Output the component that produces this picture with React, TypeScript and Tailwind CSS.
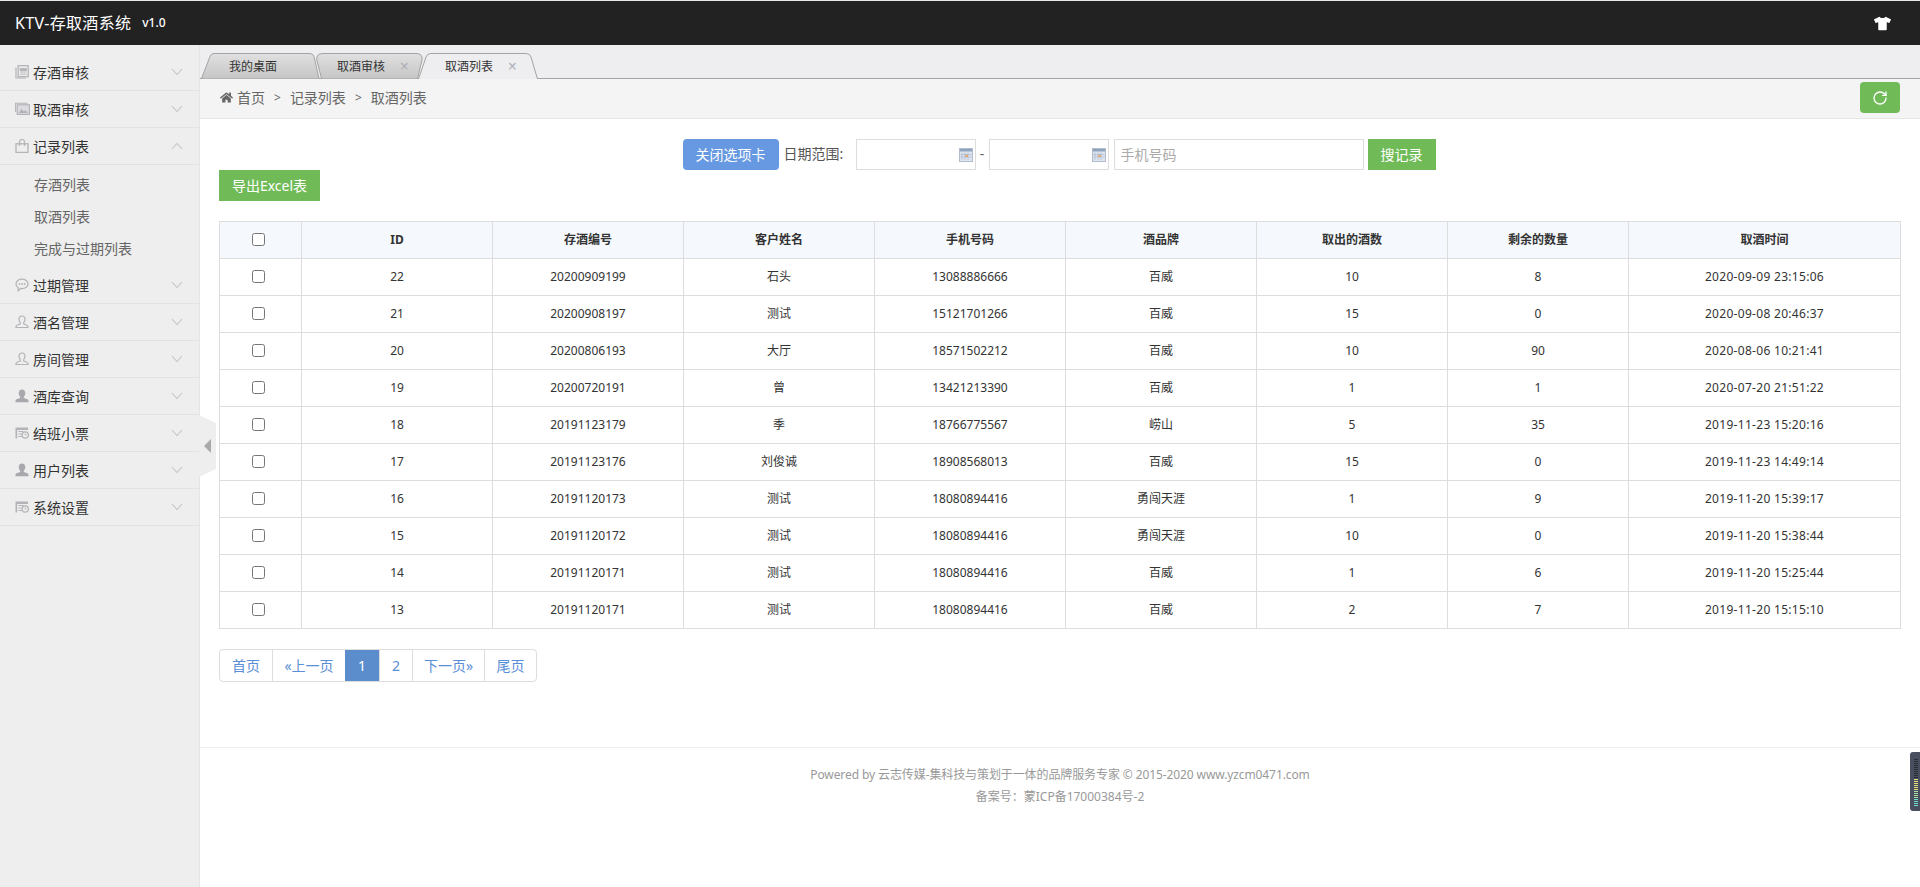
import React from 'react';
import { RotateCw } from 'lucide-react';
import { FaHome, FaTshirt } from 'react-icons/fa';

interface MenuItem {
    label: string;
    icon: React.ReactNode;
    open?: boolean;
    children?: string[];
}

const IconDoc = () => (
    <svg width="14" height="14" viewBox="0 0 14 14" className="text-[#b4b4b8]">
        <path d="M1 2.5v10.500h10" fill="none" stroke="currentColor" strokeWidth="1.200" />
        <rect x="3.200" y="0.700" width="10" height="11" fill="none" stroke="currentColor" strokeWidth="1.300" />
        <path d="M5 3.500h6.500v2H5zM5 7h6.500M5 9.200h6.500" fill="currentColor" stroke="currentColor" strokeWidth="0.900" />
    </svg>
);

const IconImage = () => (
    <svg width="15" height="14" viewBox="0 0 15 14" className="text-[#b4b4b8]">
        <path d="M0.600 10V1.200H12.500" fill="none" stroke="currentColor" strokeWidth="1.100" />
        <rect x="2.200" y="2.800" width="12.200" height="9.600" fill="#dcdce0" stroke="currentColor" strokeWidth="1.200" />
        <path d="M3.500 11l3-4 2.500 2.500 1.500-1.500 2.500 3z" fill="currentColor" />
    </svg>
);

const IconBag = () => (
    <svg width="14" height="14" viewBox="0 0 14 14" className="text-[#b4b4b8]">
        <rect x="1" y="4.800" width="12" height="8.600" fill="none" stroke="currentColor" strokeWidth="1.300" />
        <path d="M4.500 7V3a2.500 2.500 0 0 1 5 0v4" fill="none" stroke="currentColor" strokeWidth="1.200" />
    </svg>
);

const IconChat = () => (
    <svg width="14" height="14" viewBox="0 0 14 14" className="text-[#b4b4b8]">
        <path d="M7 1.200c3.200 0 6 1.900 6 4.700S10.200 10.600 7 10.600c-.5 0-1 0-1.400-.1L3.200 12.800v-3.100C1.800 8.800 1 7.500 1 5.900 1 3.100 3.800 1.200 7 1.200z" fill="none" stroke="currentColor" strokeWidth="1.300" />
        <circle cx="4.400" cy="6" r="0.900" fill="currentColor" />
        <circle cx="7" cy="6" r="0.900" fill="currentColor" />
        <circle cx="9.600" cy="6" r="0.900" fill="currentColor" />
    </svg>
);

const IconUserLine = () => (
    <svg width="14" height="14" viewBox="0 0 14 14" className="text-[#b4b4b8]">
        <path d="M7 1c1.800 0 3 1.400 3 3.300 0 1.500-.6 2.600-1.300 3.400v1.200c1.800.7 4 1.300 4.300 2.400v1.200H1v-1.200c.3-1.100 2.500-1.700 4.300-2.400V7.700C4.600 6.900 4 5.800 4 4.300 4 2.400 5.200 1 7 1z" fill="none" stroke="currentColor" strokeWidth="1.200" />
    </svg>
);

const IconUserSolid = () => (
    <svg width="14" height="14" viewBox="0 0 14 14" className="text-[#a8a8ae]">
        <path d="M7 .5c2 0 3.300 1.500 3.300 3.600 0 1.700-.7 3-1.500 3.800v1.200c1.900.6 4.200 1.200 4.700 2.400v1.800H.500v-1.800c.5-1.200 2.800-1.800 4.700-2.400V7.900C4.400 7.100 3.700 5.800 3.700 4.100 3.700 2 5 .5 7 .5z" fill="currentColor" />
    </svg>
);

const IconCard = () => (
    <svg width="14" height="14" viewBox="0 0 14 14" className="text-[#b4b4b8]">
        <path d="M.5 1.500h12.500v2.500H2.200v8.500H.500z" fill="currentColor" />
        <path d="M3.500 5.500h5M3.500 8h3.500M3.500 10.500h3.500" stroke="currentColor" strokeWidth="1.200" />
        <circle cx="10.300" cy="9" r="3.100" fill="#eeeeee" stroke="currentColor" strokeWidth="1.200" />
        <path d="M10.300 7.500V9h1.400" fill="none" stroke="currentColor" strokeWidth="0.900" />
    </svg>
);

const IconCalendar = () => (
    <svg width="14" height="14" viewBox="0 0 14 14">
        <rect x="0.500" y="0.500" width="13" height="13" fill="#dfe5f0" stroke="#b3bccb" />
        <rect x="1" y="1" width="12" height="2.500" fill="#8fa3c0" />
        <path d="M3 4.500v7.500M6 4.500v7.500M9 4.500v7.500M1.500 6.500h11M1.500 9h11" stroke="#a9b7cc" strokeWidth="0.700" />
        <rect x="6.300" y="6.800" width="2.500" height="2" fill="#e2a45d" />
    </svg>
);

const Chevron = ({ up }: { up?: boolean }) => (
    <svg width="12" height="8" viewBox="0 0 12 8" className="text-[#c4c4c4]">
        <path d={up ? 'M1 7l5-5.500L11 7' : 'M1 1l5 5.500L11 1'} fill="none" stroke="currentColor" strokeWidth="1.100" />
    </svg>
);

const menus: MenuItem[] = [
    { label: '存酒审核', icon: <IconDoc /> },
    { label: '取酒审核', icon: <IconImage /> },
    { label: '记录列表', icon: <IconBag />, open: true, children: ['存酒列表', '取酒列表', '完成与过期列表'] },
    { label: '过期管理', icon: <IconChat /> },
    { label: '酒名管理', icon: <IconUserLine /> },
    { label: '房间管理', icon: <IconUserLine /> },
    { label: '酒库查询', icon: <IconUserSolid /> },
    { label: '结班小票', icon: <IconCard /> },
    { label: '用户列表', icon: <IconUserSolid /> },
    { label: '系统设置', icon: <IconCard /> },
];

const rows = [
    [22, '20200909199', '石头', '13088886666', '百威', 10, 8, '2020-09-09 23:15:06'],
    [21, '20200908197', '测试', '15121701266', '百威', 15, 0, '2020-09-08 20:46:37'],
    [20, '20200806193', '大厅', '18571502212', '百威', 10, 90, '2020-08-06 10:21:41'],
    [19, '20200720191', '曾', '13421213390', '百威', 1, 1, '2020-07-20 21:51:22'],
    [18, '20191123179', '季', '18766775567', '崂山', 5, 35, '2019-11-23 15:20:16'],
    [17, '20191123176', '刘俊诚', '18908568013', '百威', 15, 0, '2019-11-23 14:49:14'],
    [16, '20191120173', '测试', '18080894416', '勇闯天涯', 1, 9, '2019-11-20 15:39:17'],
    [15, '20191120172', '测试', '18080894416', '勇闯天涯', 10, 0, '2019-11-20 15:38:44'],
    [14, '20191120171', '测试', '18080894416', '百威', 1, 6, '2019-11-20 15:25:44'],
    [13, '20191120171', '测试', '18080894416', '百威', 2, 7, '2019-11-20 15:15:10'],
];

const headers = ['ID', '存酒编号', '客户姓名', '手机号码', '酒品牌', '取出的酒数', '剩余的数量', '取酒时间'];

const Sidebar = () => (
    <aside className="relative w-[200px] shrink-0 bg-[#eeeeee] border-r border-[#e5e5e5] pt-[9px]">
        {menus.map(menu => (
            <div key={menu.label}>
                <div className="h-[37px] border-b border-[#e2e2e2] flex items-center pl-[15px] pr-[16px] text-sm text-[#333]">
                    <span className="w-[18px] flex shrink-0">{menu.icon}</span>
                    <span className="flex-1 pt-px">{menu.label}</span>
                    <Chevron up={menu.open} />
                </div>
                {menu.children && (
                    <ul className="pt-[4px] pb-[2px]">
                        {menu.children.map(child => (
                            <li key={child} className="h-[32px] leading-[32px] pl-[34px] text-[14px] text-[#666]">{child}</li>
                        ))}
                    </ul>
                )}
            </div>
        ))}
        {/* collapse handle */}
        <svg width="18" height="62" viewBox="0 0 18 62" className="absolute left-full top-[370px]">
            <path d="M0 0l17 8v46L0 62z" fill="#eeeeee" />
            <path d="M12 24v14l-7-7z" fill="#a9a9a9" />
        </svg>
    </aside>
);

const Tab = ({ label, width, path, active, closable, textLeft, className }: { label: string, width: number, path: string, active?: boolean, closable?: boolean, textLeft: number, className?: string }) => (
    <div className={`relative shrink-0 ${active ? 'h-[26px] z-10 -mb-px' : 'h-[25px]'} ${className ?? ''}`} style={{ width }}>
        <svg width={width} height="26" viewBox={`0 0 ${width} 26`} className="absolute left-0 top-0">
            <defs>
                <linearGradient id="tabBg" x1="0" y1="0" x2="0" y2="1">
                    <stop offset="0" stopColor="#e0e0e0" />
                    <stop offset="1" stopColor="#c6c6c6" />
                </linearGradient>
            </defs>
            <path d={path} fill={active ? '#eeeef0' : 'url(#tabBg)'} stroke="#a3a3a3" />
        </svg>
        <span className="absolute top-0 leading-[27px] text-xs text-[#333] whitespace-nowrap" style={{ left: textLeft }}>{label}</span>
        {closable && <span className="absolute top-0 leading-[26px] text-base text-[#b0b0b8]" style={{ right: active ? 21 : 15 }}>×</span>}
    </div>
);

const Tabs = () => (
    <div className="h-[34px] bg-[#eeeef0] border-b border-[#a3a3a3] flex items-end pl-px shrink-0">
        <Tab label="我的桌面" width={120} textLeft={28} path="M0.500 25.500L9 3.500Q10 0.500 13 0.500L109 0.500Q112 0.500 113 3.500L118 25.500" />
        <Tab label="取酒审核" width={108} textLeft={21} closable className="-ml-[5px] z-[1]" path="M5.500 25.500L0.800 7Q0 0.500 7 0.500L100 0.500Q107 0.500 106 7L101.500 25.500" />
        <Tab label="取酒列表" width={120} textLeft={27} active closable className="-ml-[6px]" path="M0.500 26L8 4Q9 0.500 13 0.500L108 0.500Q112 0.500 113 4L119.500 26" />
    </div>
);

const Breadcrumb = () => (
    <div className="h-[40px] bg-[#f4f4f4] border-b border-[#e5e5e5] flex items-center pl-[20px] pr-[20px] pb-[2px] text-sm text-[#666] shrink-0">
        <FaHome className="text-[13px] text-[#666] mr-[4px]" />
        <span>首页</span>
        <span className="mx-[9px] text-xs">&gt;</span>
        <span>记录列表</span>
        <span className="mx-[9px] text-xs">&gt;</span>
        <span>取酒列表</span>
        <button className="ml-auto w-[40px] h-[31px] rounded-[4px] bg-[#70bb57] text-white flex items-center justify-center">
            <RotateCw size={16} strokeWidth={2} />
        </button>
    </div>
);

const DateInput = () => (
    <div className="w-[120px] h-[31px] bg-white border border-[#ddd] flex items-center justify-end pr-[2px]">
        <IconCalendar />
    </div>
);

const Filter = () => (
    <div className="flex justify-center h-[31px] pr-[2px] text-sm">
        <button className="w-[96px] h-[31px] rounded-[4px] bg-[#6699e1] text-white">关闭选项卡</button>
        <label className="ml-[5px] w-[72px] leading-[29px] text-[#555]">日期范围:</label>
        <DateInput />
        <span className="w-[13px] text-center leading-[29px] text-[#666]">-</span>
        <DateInput />
        <input placeholder="手机号码" className="ml-[5px] w-[250px] h-[31px] border border-[#ddd] px-[6px] placeholder:text-[#aaa] outline-none" />
        <button className="ml-[4px] w-[68px] h-[31px] bg-[#70bb57] text-white">搜记录</button>
    </div>
);

const DataTable = () => (
    <table className="w-full table-fixed border-collapse mt-[20px] text-xs text-[#333]">
        <colgroup>
            <col className="w-[82px]" />
            <col className="w-[191px]" />
            <col className="w-[191px]" />
            <col className="w-[191px]" />
            <col className="w-[191px]" />
            <col className="w-[191px]" />
            <col className="w-[191px]" />
            <col className="w-[181px]" />
            <col />
        </colgroup>
        <thead>
            <tr className="h-[37px] bg-[#f5f8fd]">
                <th className="border border-[#ddd] p-0 pr-[5px] pb-[2px]"><input type="checkbox" className="align-middle" /></th>
                {headers.map(h => (
                    <th key={h} className="border border-[#ddd] p-0 font-bold">{h}</th>
                ))}
            </tr>
        </thead>
        <tbody>
            {rows.map(row => (
                <tr key={row[0]} className="h-[37px]">
                    <td className="border border-[#ddd] p-0 pr-[5px] pb-[2px] text-center"><input type="checkbox" className="align-middle" /></td>
                    {row.map((cell, i) => (
                        <td key={i} className={`border border-[#ddd] p-0 text-center ${i === 7 ? 'tracking-[0.3px]' : ''}`}>{cell}</td>
                    ))}
                </tr>
            ))}
        </tbody>
    </table>
);

const pageLinks = [
    { label: '首页', w: 'w-[52px]' },
    { label: '«上一页', w: 'w-[73px]' },
    { label: '1', w: 'w-[34px]', active: true },
    { label: '2', w: 'w-[33px]' },
    { label: '下一页»', w: 'w-[72px]' },
    { label: '尾页', w: 'w-[52px]' },
];

const Pagination = () => (
    <div className="mt-[20px] flex w-fit h-[33px] border border-[#ddd] rounded-[4px] overflow-hidden text-sm">
        {pageLinks.map((p, i) => (
            <a
                key={p.label}
                className={`${p.w} flex items-center justify-center ${i > 0 && !p.active ? 'border-l border-[#ddd]' : ''} ${p.active ? 'bg-[#5b8ccc] text-white' : 'text-[#5a8ed6]'}`}
            >
                {p.label}
            </a>
        ))}
    </div>
);

export default function App() {
    return (
        <div className="h-[887px] overflow-hidden flex flex-col bg-white font-['Noto_Sans','Noto_Sans_CJK_SC',sans-serif]">
            <header className="h-[45px] shrink-0 bg-[#222] border-t border-[#e8e8e8] flex items-center pl-[15px] pr-[29px] text-white">
                <span className="text-base tracking-[0.3px]">KTV-存取酒系统</span>
                <span className="ml-[11px] text-xs font-medium">v1.0</span>
                <FaTshirt className="ml-auto text-[17px]" />
            </header>
            <div className="flex-1 flex min-h-0">
                <Sidebar />
                <main className="flex-1 min-w-0 flex flex-col">
                    <Tabs />
                    <Breadcrumb />
                    <div className="px-[19px] pt-[20px]">
                        <Filter />
                        <button className="block w-[101px] h-[31px] bg-[#70bb57] text-white text-sm">导出Excel表</button>
                        <DataTable />
                        <Pagination />
                    </div>
                    <footer className="mt-[65px] border-t border-[#eee] pt-[16px] text-center text-xs leading-[22px] text-[#999]">
                        <p className="tracking-[-0.1px]">Powered by 云志传媒-集科技与策划于一体的品牌服务专家 © 2015-2020 www.yzcm0471.com</p>
                        <p>备案号{'\uFF1A'}蒙ICP备17000384号-2</p>
                    </footer>
                </main>
            </div>
            {/* floating widget on the right edge */}
            <div className="fixed left-[1910px] top-[752px] w-[10px] h-[59px] bg-[#4a4f5f] rounded-l-[3px] flex flex-col items-end pt-[7px] pr-[2px] gap-px">
                {Array.from({ length: 24 }).map((_, i) => (
                    <span key={i} className={`block w-[4px] h-[1px] ${i < 10 ? 'bg-[#2a2c35]' : i < 16 ? 'bg-[#e4de7c]' : i < 20 ? 'bg-[#a9e0a0]' : 'bg-[#6fdcc8]'}`} />
                ))}
            </div>
        </div>
    );
}
